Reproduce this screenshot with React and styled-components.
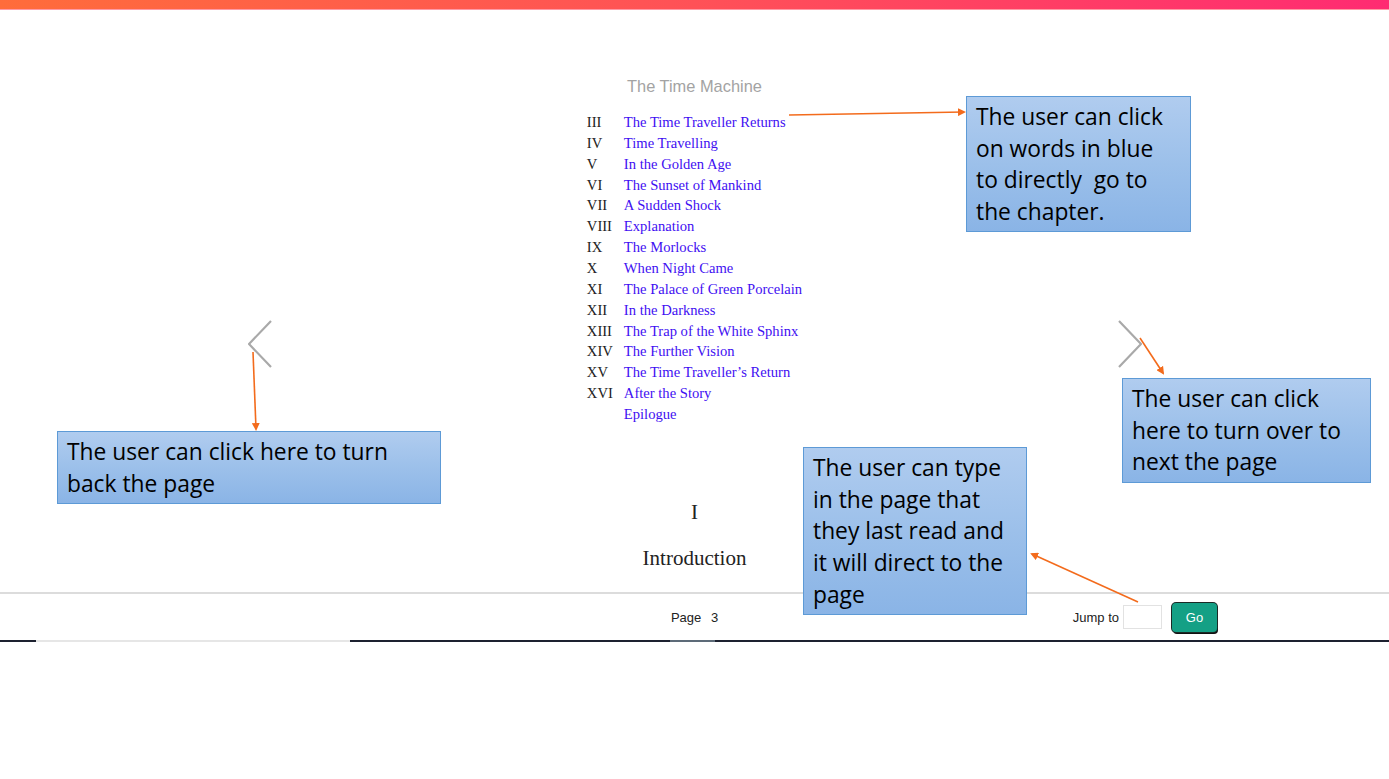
import React from "react";
import styled, { createGlobalStyle } from "styled-components";

const chapters = [
  ["III", "The Time Traveller Returns"],
  ["IV", "Time Travelling"],
  ["V", "In the Golden Age"],
  ["VI", "The Sunset of Mankind"],
  ["VII", "A Sudden Shock"],
  ["VIII", "Explanation"],
  ["IX", "The Morlocks"],
  ["X", "When Night Came"],
  ["XI", "The Palace of Green Porcelain"],
  ["XII", "In the Darkness"],
  ["XIII", "The Trap of the White Sphinx"],
  ["XIV", "The Further Vision"],
  ["XV", "The Time Traveller\u2019s Return"],
  ["XVI", "After the Story"],
  ["", "Epilogue"],
];

const notes = [
  {
    left: 966,
    top: 96,
    width: 225,
    height: 136,
    lines: ["The user can click", "on words in blue", "to directly  go to", "the chapter."],
  },
  {
    left: 57,
    top: 431,
    width: 384,
    height: 73,
    lines: ["The user can click here to turn", "back the page"],
  },
  {
    left: 1122,
    top: 378,
    width: 249,
    height: 105,
    lines: ["The user can click", "here to turn over to", "next the page"],
  },
  {
    left: 803,
    top: 447,
    width: 224,
    height: 168,
    lines: ["The user can type", "in the page that", "they last read and", "it will direct to the", "page"],
  },
];

const arrows = [
  [789, 115, 964, 112],
  [253, 352, 256, 429],
  [1140, 338, 1163, 373],
  [1138, 602, 1032, 554],
];

const track = [
  ["#1d2130", 36],
  ["#e6e6e6", 314],
  ["#1d2130", 320],
  ["#5d6b78", 45],
  ["#1d2130", 674],
];

function App() {
  return (
    <>
      <GlobalStyle />
      <Screen>
        <TopBar />
        <Reader>
          <Turn aria-label="previous page">
            <svg width="24" height="48" viewBox="0 0 24 48">
              <polyline points="23,1 1,24 23,47" fill="none" stroke="#a9a9a9" strokeWidth="2.2" />
            </svg>
          </Turn>
          <PageColumn>
            <BookTitle>The Time Machine</BookTitle>
            <Contents>
              {chapters.map(([num, name]) => (
                <ContentRow key={name}>
                  <Numeral>{num}</Numeral>
                  <ChapterLink href="#">{name}</ChapterLink>
                </ContentRow>
              ))}
            </Contents>
            <ChapterNumber>I</ChapterNumber>
            <ChapterName>Introduction</ChapterName>
          </PageColumn>
          <Turn aria-label="next page">
            <svg width="24" height="48" viewBox="0 0 24 48">
              <polyline points="1,1 23,24 1,47" fill="none" stroke="#a9a9a9" strokeWidth="2.2" />
            </svg>
          </Turn>
        </Reader>
        <Footer>
          <span />
          <PageLabel>
            Page <b>3</b>
          </PageLabel>
          <JumpForm>
            <span>Jump to</span>
            <JumpInput />
            <GoButton>Go</GoButton>
          </JumpForm>
        </Footer>
        <Track>
          {track.map(([color, w], i) => (
            <TrackPart key={i} $color={color} $w={w} />
          ))}
        </Track>

        <Overlay width="1389" height="779">
          <defs>
            <marker id="head" markerWidth="8" markerHeight="8" refX="6" refY="4" orient="auto" markerUnits="userSpaceOnUse">
              <path d="M0,0 L8,4 L0,8 z" fill="#f36b1c" />
            </marker>
          </defs>
          {arrows.map(([x1, y1, x2, y2], i) => (
            <line key={i} x1={x1} y1={y1} x2={x2} y2={y2} stroke="#f36b1c" strokeWidth="1.6" markerEnd="url(#head)" />
          ))}
        </Overlay>
        {notes.map((n, i) => (
          <Note key={i} $left={n.left} $top={n.top} $w={n.width} $h={n.height}>
            {n.lines.map((l) => (
              <NoteLine key={l}>{l}</NoteLine>
            ))}
          </Note>
        ))}
      </Screen>
    </>
  );
}

const GlobalStyle = createGlobalStyle`
  body {
    margin: 0;
    background: #fff;
    font-family: "Liberation Sans", Arial, sans-serif;
  }
`;

const Screen = styled.div`
  position: relative;
  width: 1389px;
  height: 779px;
  overflow: hidden;
  background: #fff;
`;

const TopBar = styled.div`
  height: 9px;
  background: linear-gradient(90deg, #ff6c3b 0%, #ff5157 50%, #ff2b72 100%);
  border-bottom: 1px solid #ff9aa6;
`;

const Reader = styled.div`
  display: flex;
  justify-content: center;
  gap: 223px;
  height: 582px;
`;

const Turn = styled.div`
  width: 24px;
  margin-top: 310px;
  cursor: pointer;
  svg {
    display: block;
  }
`;

const PageColumn = styled.div`
  width: 400px;
  display: flex;
  flex-direction: column;
  align-items: center;
  padding-top: 66px;
`;

const BookTitle = styled.h1`
  margin: 0;
  font-family: "Liberation Sans", Arial, sans-serif;
  font-weight: normal;
  font-size: 16.4px;
  line-height: 20px;
  color: #a3a3a3;
`;

const Contents = styled.div`
  margin-top: 16px;
  font-family: "Liberation Serif", "Times New Roman", serif;
  font-size: 14.6px;
`;

const ContentRow = styled.div`
  display: flex;
  height: 20.86px;
  line-height: 20.86px;
  white-space: nowrap;
`;

const Numeral = styled.span`
  width: 37px;
  color: #222;
`;

const ChapterLink = styled.a`
  color: #3f10f2;
  text-decoration: none;
`;

const ChapterNumber = styled.div`
  margin-top: 75px;
  font-family: "Liberation Serif", "Times New Roman", serif;
  font-size: 21px;
  line-height: 24px;
  color: #222;
`;

const ChapterName = styled.h2`
  margin: 22px 0 0;
  font-family: "Liberation Serif", "Times New Roman", serif;
  font-weight: normal;
  font-size: 21px;
  line-height: 24px;
  color: #222;
`;

const Footer = styled.div`
  display: grid;
  grid-template-columns: 1fr auto 1fr;
  align-items: center;
  height: 46px;
  border-top: 2px solid #dcdcdc;
  font-size: 13px;
  color: #222;
`;

const PageLabel = styled.div`
  word-spacing: 6px;
  b {
    font-weight: normal;
  }
`;

const JumpForm = styled.div`
  display: flex;
  justify-content: flex-end;
  align-items: center;
  padding-right: 172px;
  gap: 4px;
`;

const JumpInput = styled.input`
  width: 39px;
  height: 24px;
  box-sizing: border-box;
  border: 1px solid #e2e2e2;
  margin-right: 6px;
`;

const GoButton = styled.button`
  width: 45px;
  height: 29px;
  border: none;
  border-radius: 4px;
  background: #14a085;
  color: #fff;
  font-family: "Liberation Sans", Arial, sans-serif;
  font-size: 13px;
  box-shadow: 0 0 0 1px #1b2a26, 1px 2px 0 #111;
`;

const Track = styled.div`
  display: flex;
  height: 2px;
`;

const TrackPart = styled.div`
  width: ${(p) => p.$w}px;
  background: ${(p) => p.$color};
`;

const Overlay = styled.svg`
  position: absolute;
  left: 0;
  top: 0;
  pointer-events: none;
`;

const Note = styled.div`
  position: absolute;
  left: ${(p) => p.$left}px;
  top: ${(p) => p.$top}px;
  width: ${(p) => p.$w}px;
  height: ${(p) => p.$h}px;
  box-sizing: border-box;
  padding: 4px 9px;
  border: 1px solid #5d9ad6;
  background: linear-gradient(180deg, #b0ccef 0%, #9cc0ea 50%, #8ab4e6 100%);
  font-family: "Open Sans", "Noto Sans", sans-serif;
  font-size: 22.8px;
  line-height: 31.7px;
  color: #000;
  overflow: hidden;
`;

const NoteLine = styled.div`
  white-space: pre;
`;

export default App;
